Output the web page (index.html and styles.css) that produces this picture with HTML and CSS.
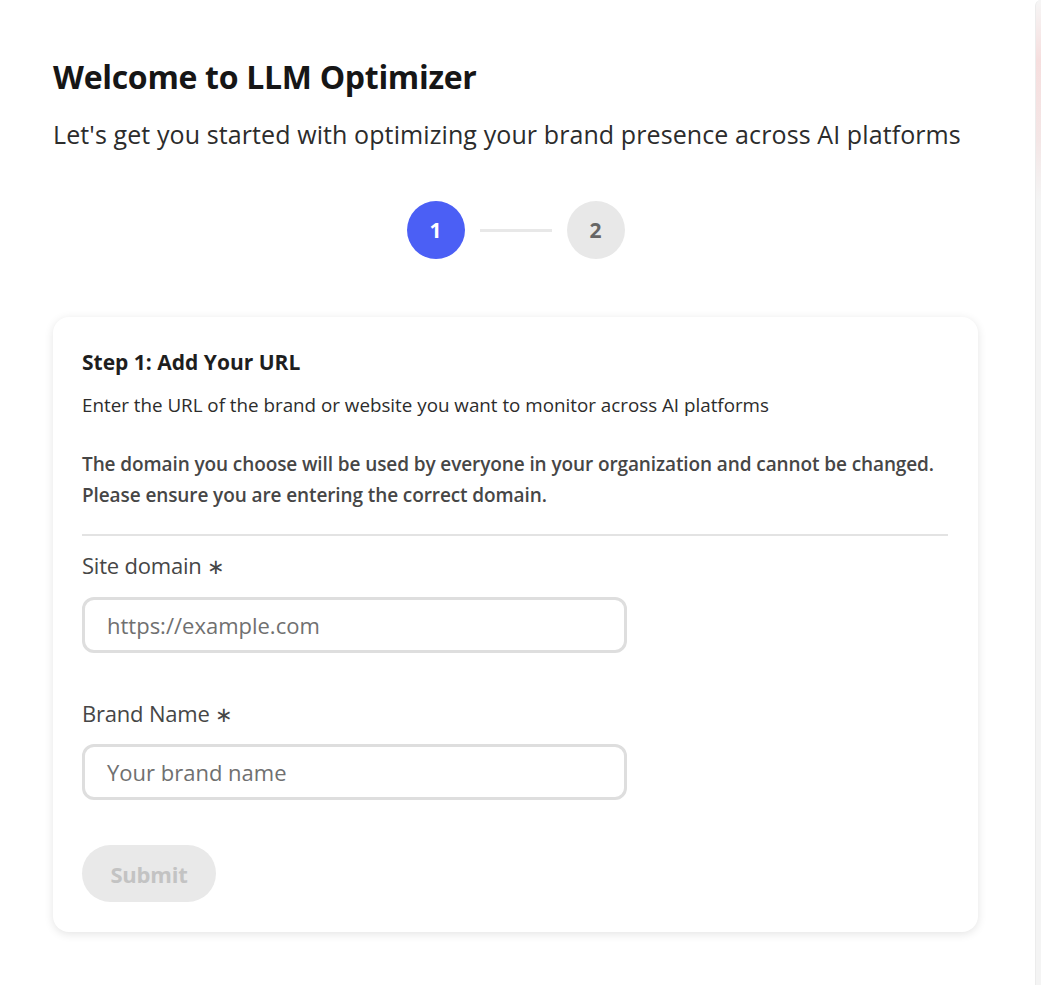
FILE: index.html
```html
<!DOCTYPE html>
<html lang="en">
<head>
<meta charset="utf-8">
<title>Welcome to LLM Optimizer</title>
<link rel="stylesheet" href="styles.css">
</head>
<body>
<div class="app">
  <main class="main">
    <h1 class="title">Welcome to LLM Optimizer</h1>
    <p class="subtitle">Let's get you started with optimizing your brand presence across AI platforms</p>
    <div class="content">
      <div class="stepper">
        <div class="step step-active">1</div>
        <div class="step-line"></div>
        <div class="step step-idle">2</div>
      </div>
      <section class="card">
        <h2 class="card-title">Step 1: Add Your URL</h2>
        <p class="card-desc">Enter the URL of the brand or website you want to monitor across AI platforms</p>
        <p class="card-warn">The domain you choose will be used by everyone in your organization and cannot be changed. Please ensure you are entering the correct domain.</p>
        <hr class="divider">
        <div class="field">
          <label class="field-label">Site domain <span class="req">∗</span></label>
          <div class="input"><span class="placeholder">https://example.com</span></div>
        </div>
        <div class="field">
          <label class="field-label">Brand Name <span class="req">∗</span></label>
          <div class="input"><span class="placeholder">Your brand name</span></div>
        </div>
        <button class="submit" disabled>Submit</button>
      </section>
    </div>
  </main>
  <aside class="side"></aside>
</div>
</body>
</html>
```
FILE: styles.css
```css
* { box-sizing: border-box; }
html, body { margin: 0; padding: 0; }
body {
  background: #ffffff;
  font-family: "Open Sans", "Noto Sans", sans-serif;
  color: #222;
  width: 1041px;
  height: 985px;
  overflow: hidden;
}
.app {
  display: flex;
  height: 985px;
}
.main {
  flex: 1;
  padding: 57px 0 0 53px;
}
.side {
  width: 6px;
  border-left: 1px solid #ececec;
  border-top-left-radius: 8px;
  background: linear-gradient(to bottom, #f6f6f6 0px, #f6dede 60px, #f4e6e6 140px, #f4f4f4 200px, #f4f4f4 100%);
}
.title {
  margin: 0;
  font-size: 32px;
  line-height: 40px;
  font-weight: 700;
  color: #161616;
  letter-spacing: -0.3px;
}
.subtitle {
  margin: 20px 0 0;
  font-size: 25px;
  line-height: 34px;
  color: #2c2c2c;
  letter-spacing: 0.1px;
  white-space: nowrap;
}
.content {
  width: 925px;
}
.stepper {
  display: flex;
  justify-content: center;
  align-items: center;
  gap: 15px;
  margin-top: 50px;
  height: 58px;
}
.step {
  width: 58px;
  height: 58px;
  border-radius: 50%;
  display: flex;
  align-items: center;
  justify-content: center;
  font-size: 21px;
  font-weight: 700;
}
.step-active { background: #4b5ff5; color: #ffffff; }
.step-idle { background: #e8e8e8; color: #666; }
.step-line {
  width: 72px;
  height: 3px;
  background: #e8e8e8;
}
.card {
  margin-top: 58px;
  background: #fff;
  border-radius: 16px;
  box-shadow: 0 2px 10px rgba(0,0,0,0.11);
  padding: 30px 30px 30px 29px;
}
.card-title {
  margin: 0;
  font-size: 21px;
  line-height: 30px;
  font-weight: 700;
  color: #1e1e1e;
  letter-spacing: 0;
}
.card-desc {
  margin: 15px 0 0;
  font-size: 18.8px;
  line-height: 26px;
  color: #2c2c2c;
  letter-spacing: 0;
}
.card-warn {
  margin: 31px 0 0;
  font-size: 19px;
  line-height: 31px;
  font-weight: 600;
  color: #464646;
  letter-spacing: -0.1px;
}
.divider {
  border: 0;
  height: 2px;
  background: #e3e3e3;
  margin: 23px 0 0;
}
.field { margin-top: 14px; }
.field + .field { margin-top: 45px; }
.field-label {
  display: block;
  font-size: 22px;
  line-height: 30px;
  color: #464646;
  letter-spacing: -0.2px;
}
.req { font-size: 21px; }
.input {
  margin-top: 16px;
  width: 545px;
  height: 56px;
  border: 3px solid #dedede;
  border-radius: 12px;
  display: flex;
  align-items: center;
  padding-left: 22px;
}
.field + .field .input { margin-top: 15px; }
.placeholder {
  font-size: 22px;
  color: #707070;
  letter-spacing: 0;
}
.submit {
  margin-top: 45px;
  width: 134px;
  height: 57px;
  border: 0;
  border-radius: 29px;
  background: #e9e9e9;
  color: #c3c3c3;
  font-family: inherit;
  font-size: 22px;
  font-weight: 700;
  letter-spacing: -0.2px;
  padding: 0;
}
```
